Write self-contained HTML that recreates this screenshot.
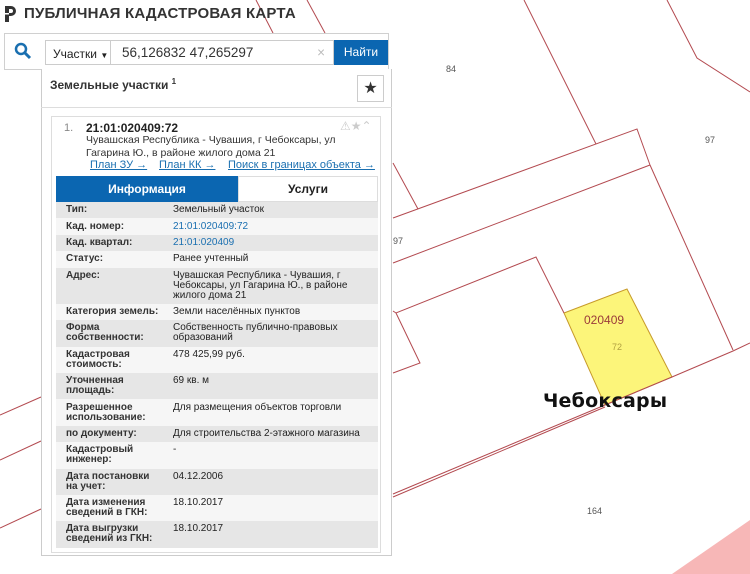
<!DOCTYPE html>
<html><head><meta charset="utf-8"><style>
*{margin:0;padding:0;box-sizing:border-box}
body{width:750px;height:574px;position:relative;overflow:hidden;background:#fff;font-family:"Liberation Sans","DejaVu Sans",sans-serif;color:#222}
.a{position:absolute}
svg.map{position:absolute;left:0;top:0}
.title{left:24px;top:5px;font-size:15px;font-weight:bold;color:#333;letter-spacing:0.2px}
.sbar{left:4px;top:33px;width:385px;height:37px;background:#fff;border:1px solid #d0d0d0}
.panel{left:41px;top:69px;width:351px;height:487px;background:#fff;border:1px solid #ccc;border-top:none}
.card{left:51px;top:116px;width:330px;height:437px;border:1px solid #ddd;background:#fff}
table{position:absolute;left:56px;top:202px;width:322px;border-collapse:collapse;font-size:10px;line-height:10px}
td{vertical-align:top;padding:3.2px 0 3.2px 11px}
td.l{font-weight:bold;width:106px;color:#333;padding-left:10px}
tr:nth-child(odd){background:#e6e6e6}
tr:nth-child(even){background:#f6f6f6}
.lnk{color:#1a6fb0}
.u{color:#1a6fb0;text-decoration:underline;font-size:11px}
</style></head><body>
<svg class="map" width="750" height="574" viewBox="0 0 750 574">
<polygon points="672,574 750,520 750,574" fill="#f7b7b7"/>
<polygon points="564,313 627,289 672,377 605,405" fill="#fcf57a" stroke="#c79a2a" stroke-width="1"/>
<g stroke="#b34a50" stroke-width="1" fill="none">
<line x1="256" y1="0" x2="273" y2="33"/>
<line x1="307" y1="0" x2="325" y2="33"/>
<line x1="524" y1="0" x2="596" y2="144"/>
<polyline points="667,0 697,58 750,92"/>
<line x1="393" y1="163" x2="418" y2="209"/>
<polyline points="393,218 637,129 650,165"/>
<line x1="650" y1="165" x2="733" y2="350"/>
<line x1="393" y1="263" x2="650" y2="165"/>
<polyline points="393,311 396,313 536,257 564,313"/>
<polyline points="396,313 420,363 393,373"/>
<polyline points="605,405 672,377 733,351 750,343"/>
<line x1="393" y1="494" x2="605" y2="405"/>
<line x1="393" y1="497" x2="605" y2="407"/>
<line x1="0" y1="415" x2="41" y2="397"/>
<line x1="0" y1="460" x2="41" y2="441"/>
<line x1="0" y1="528" x2="41" y2="509"/>
</g>
<g font-family="Liberation Sans,sans-serif" font-size="9" fill="#555">
<text x="446" y="72">84</text><text x="705" y="143">97</text><text x="393" y="244">97</text><text x="587" y="514">164</text>
<text x="612" y="350" fill="#b0a040">72</text>
<text x="584" y="324" font-size="12" fill="#9a3a3a">020409</text>
</g>
<text x="543" y="407" font-family="DejaVu Sans,sans-serif" font-size="19" font-weight="bold" fill="#111" textLength="124">Чебоксары</text>
</svg>
<svg class="a" style="left:3px;top:5px" width="14" height="18" viewBox="0 0 14 18"><path d="M2 1h6a5 5 0 0 1 0 10H6v6H2z" fill="#333"/><path d="M6 4h2a2 2 0 0 1 0 4H6z" fill="#fff"/><rect x="2" y="8" width="4" height="1.5" fill="#fff"/></svg>
<div class="a title">ПУБЛИЧНАЯ КАДАСТРОВАЯ КАРТА</div>
<div class="a sbar"></div>
<svg class="a" style="left:14px;top:42px" width="18" height="18" viewBox="0 0 18 18"><circle cx="7" cy="7" r="5" stroke="#1a6fb0" stroke-width="2.5" fill="none"/><line x1="11" y1="11" x2="16" y2="16" stroke="#1a6fb0" stroke-width="3"/></svg>
<div class="a" style="left:45px;top:40px;width:66px;height:25px;border:1px solid #ccc;font-size:12px;padding:6px 0 0 7px">Участки <span style="font-size:8px">▼</span></div>
<div class="a" style="left:110px;top:40px;width:224px;height:25px;border:1px solid #ccc;border-left:none;font-size:13.5px;padding:4px 0 0 12px;color:#333">56,126832 47,265297<span style="position:absolute;right:8px;top:4px;color:#bbb">×</span></div>
<div class="a" style="left:334px;top:40px;width:54px;height:25px;background:#0b66b1;color:#fff;font-size:12px;text-align:center;line-height:25px">Найти</div>
<div class="a panel"></div>
<div class="a" style="left:50px;top:77px;font-size:12px;font-weight:bold;color:#333">Земельные участки <sup style="font-size:8px">1</sup></div>
<div class="a" style="left:357px;top:75px;width:27px;height:27px;border:1px solid #ccc;font-size:16px;text-align:center;line-height:26px;color:#333">★</div>
<div class="a" style="left:41px;top:107px;width:351px;height:1px;background:#ddd"></div>
<div class="a card"></div>
<div class="a" style="left:64px;top:122px;font-size:11px;color:#888">1.</div>
<div class="a" style="left:86px;top:121px;font-size:12px;font-weight:bold;color:#222">21:01:020409:72</div>
<div class="a" style="left:340px;top:119px;font-size:12px;color:#ccc">⚠★⌃</div>
<div class="a" style="left:86px;top:134px;font-size:10.5px;line-height:12.5px;color:#333">Чувашская Республика - Чувашия, г Чебоксары, ул<br>Гагарина Ю., в районе жилого дома 21</div>
<div class="a u" style="left:90px;top:159px">План ЗУ →</div>
<div class="a u" style="left:159px;top:159px">План КК →</div>
<div class="a u" style="left:228px;top:159px">Поиск в границах объекта →</div>
<div class="a" style="left:56px;top:176px;width:182px;height:26px;background:#0b66b1;color:#fff;font-size:12px;font-weight:bold;text-align:center;line-height:26px">Информация</div>
<div class="a" style="left:238px;top:176px;width:140px;height:26px;border:1px solid #ddd;font-size:12px;font-weight:bold;text-align:center;line-height:24px">Услуги</div>
<table>
<tr><td class="l">Тип:</td><td>Земельный участок</td></tr>
<tr><td class="l">Кад. номер:</td><td class="lnk">21:01:020409:72</td></tr>
<tr><td class="l">Кад. квартал:</td><td class="lnk">21:01:020409</td></tr>
<tr><td class="l">Статус:</td><td>Ранее учтенный</td></tr>
<tr><td class="l">Адрес:</td><td>Чувашская Республика - Чувашия, г Чебоксары, ул Гагарина Ю., в районе жилого дома 21</td></tr>
<tr><td class="l">Категория земель:</td><td>Земли населённых пунктов</td></tr>
<tr><td class="l">Форма собственности:</td><td>Собственность публично-правовых образований</td></tr>
<tr><td class="l">Кадастровая стоимость:</td><td>478 425,99 руб.</td></tr>
<tr><td class="l">Уточненная площадь:</td><td>69 кв. м</td></tr>
<tr><td class="l">Разрешенное использование:</td><td>Для размещения объектов торговли</td></tr>
<tr><td class="l">по документу:</td><td>Для строительства 2-этажного магазина</td></tr>
<tr><td class="l">Кадастровый инженер:</td><td>-</td></tr>
<tr><td class="l">Дата постановки на учет:</td><td>04.12.2006</td></tr>
<tr><td class="l">Дата изменения сведений в ГКН:</td><td>18.10.2017</td></tr>
<tr><td class="l">Дата выгрузки сведений из ГКН:</td><td>18.10.2017</td></tr>
</table>
</body></html>
